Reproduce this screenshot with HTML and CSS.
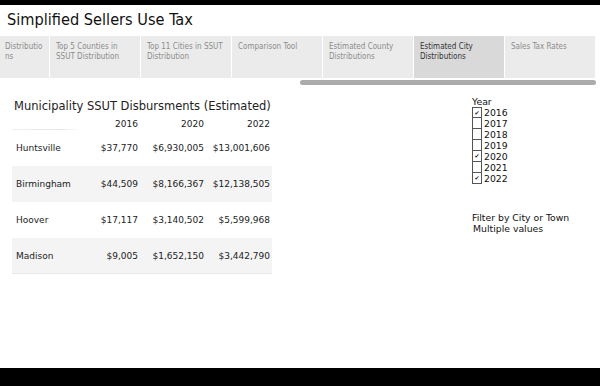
FILE: index.html
```html
<!DOCTYPE html>
<html lang="en">
<head>
  <meta charset="UTF-8" />
  <title>Simplified Sellers Use Tax</title>
  <link rel="stylesheet" href="styles.css">
</head>
<body>
  <div class="topbar"></div>
  <h1 class="page-title">Simplified Sellers Use Tax</h1>

  <!-- story tabs -->
  <nav class="tabs">
    <div class="tab first">Distributions</div>
    <div class="tab">Top 5 Counties in SSUT Distribution</div>
    <div class="tab">Top 11 Cities in SSUT Distribution</div>
    <div class="tab">Comparison Tool</div>
    <div class="tab">Estimated County Distributions</div>
    <div class="tab active">Estimated City Distributions</div>
    <div class="tab">Sales Tax Rates</div>
  </nav>
  <div class="scroll"><div class="thumb"></div></div>

  <div class="content">
    <!-- table -->
    <section class="sheet">
      <div class="sheet-title">Municipality SSUT Disbursments (Estimated)</div>
      <div class="grid">
        <div class="row head">
          <div class="cell name"></div>
          <div class="cell">2016</div>
          <div class="cell">2020</div>
          <div class="cell">2022</div>
        </div>
        <div class="row">
          <div class="cell name">Huntsville</div>
          <div class="cell">$37,770</div>
          <div class="cell">$6,930,005</div>
          <div class="cell">$13,001,606</div>
        </div>
        <div class="row alt">
          <div class="cell name">Birmingham</div>
          <div class="cell">$44,509</div>
          <div class="cell">$8,166,367</div>
          <div class="cell">$12,138,505</div>
        </div>
        <div class="row">
          <div class="cell name">Hoover</div>
          <div class="cell">$17,117</div>
          <div class="cell">$3,140,502</div>
          <div class="cell">$5,599,968</div>
        </div>
        <div class="row alt last">
          <div class="cell name">Madison</div>
          <div class="cell">$9,005</div>
          <div class="cell">$1,652,150</div>
          <div class="cell">$3,442,790</div>
        </div>
      </div>
    </section>

    <!-- filters -->
    <aside class="filters">
      <div class="f-title">Year</div>
      <ul class="checks">
        <li><span class="box on"></span>2016</li>
        <li><span class="box"></span>2017</li>
        <li><span class="box"></span>2018</li>
        <li><span class="box"></span>2019</li>
        <li><span class="box on"></span>2020</li>
        <li><span class="box"></span>2021</li>
        <li><span class="box on"></span>2022</li>
      </ul>
      <div class="f-title city">Filter by City or Town</div>
      <div class="f-value">Multiple values</div>
    </aside>
  </div>

  <div class="bottombar"></div>
</body>
</html>
```

FILE: styles.css
```css
*{box-sizing:border-box;margin:0;padding:0}
html,body{height:100%}
body{font-family:'DejaVu Sans',sans-serif;background:#fff;color:#333;display:flex;flex-direction:column;overflow:hidden}
.topbar{height:5px;background:#000;flex:none}
.bottombar{height:18px;background:#000;margin-top:auto;flex:none}
.page-title{font-family:'DejaVu Sans Condensed','DejaVu Sans',sans-serif;font-size:16.2px;font-weight:normal;color:#111;line-height:20px;padding:5px 7px 0;height:31px}
/* tabs */
.tabs{display:flex;gap:1px;height:42px;overflow:hidden}
.tab{flex:none;width:90px;background:#ebebeb;color:#8c8c8c;font-family:'DejaVu Sans Condensed','DejaVu Sans',sans-serif;font-size:8px;line-height:9.5px;padding:6px 6px 0}
.tab.first{width:49px;padding-left:5px;padding-right:4px;word-break:break-all}
.tab.active{background:#d9d9d9;color:#333}
.scroll{height:7px;padding:2px 0 0 300px}
.thumb{width:296px;height:5px;background:#ababab;border-radius:3px}
/* content */
.content{display:flex;padding-top:13px}
.sheet{width:260px;margin-left:12px}
.sheet-title{font-size:11.5px;line-height:14px;color:#222;padding-left:2px;white-space:nowrap;margin-top:1px;margin-bottom:-1px}
.grid{font-size:9px;color:#222}
.row{display:grid;grid-template-columns:68px 60px 66px 66px;height:36px;align-items:center}
.row.alt{background:#f4f4f4}
.row.last{border-bottom:1px solid #e8e8e8}
.row.head{height:18px;align-items:end;padding-bottom:1px}
.row.head .name{height:1px;background:linear-gradient(90deg,#f0f0f0,#e4e4e4 70%,#fff);align-self:end;margin-bottom:-1px}
.cell{text-align:right;padding-right:2px;white-space:nowrap}
.cell.name{text-align:left;padding-left:4px}
/* filters */
.filters{margin-left:200px;font-size:9.3px;color:#111;line-height:11px}
.f-title{margin-top:-2px}
.checks{list-style:none}
.checks li{display:flex;align-items:center;gap:2px;height:11px}
.box{width:10px;height:11px;border:1px solid #555;border-top-width:0;display:flex;align-items:center;justify-content:center}
.checks li:first-child .box{border-top-width:1px}
.box.on::after{content:"\2714";font-size:6px;line-height:6px;color:#222}
.f-title.city{margin-top:28px}
.f-value{padding-left:1px}
```
